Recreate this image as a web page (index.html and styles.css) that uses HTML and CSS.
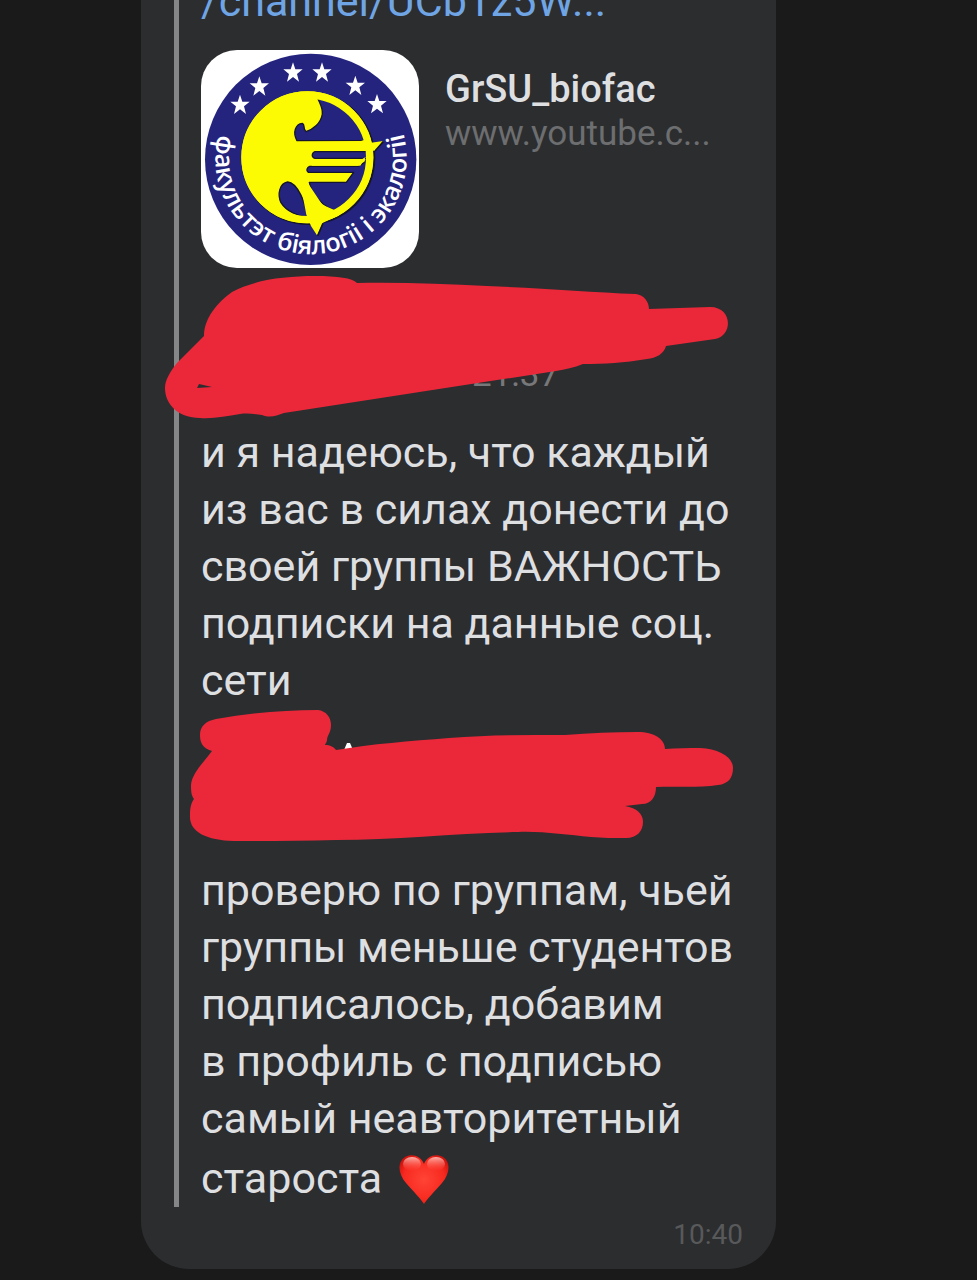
FILE: index.html
```html
<!DOCTYPE html>
<html lang="ru">
<head>
  <meta charset="UTF-8">
  <meta name="viewport" content="width=device-width, initial-scale=1">
  <title>Chat</title>
  <link rel="stylesheet" href="styles.css">
</head>
<body>

<main class="chat">
  <article class="bubble">
    <div class="forwarded">

      <a class="link" href="#">/channel/UCb1z5W...</a>

      <div class="preview">
        <svg class="preview-logo" viewBox="30 30 654 654" aria-hidden="true">
          <defs>
            <path id="star" d="M0-31 7-10H29L12 4 18 27 0 13-18 27-12 4-29-10H-7Z"/>
            <path id="ring" d="M82 284A287 287 0 1 0 638 284"/>
          </defs>
          <circle cx="359" cy="358" r="317" fill="#24247f"/>
          <g fill="#fff">
            <use href="#star" x="147" y="195"/>
            <use href="#star" x="205" y="140"/>
            <use href="#star" x="306" y="98"/>
            <use href="#star" x="393" y="98"/>
            <use href="#star" x="493" y="138"/>
            <use href="#star" x="558" y="193"/>
          </g>
          <!-- yellow disc with its shadow -->
          <circle cx="353" cy="355" r="200" fill="#15152e"/>
          <circle cx="349" cy="352" r="198" fill="#fdfb04"/>
          <!-- cutouts -->
          <g fill="#24247f" stroke="#15152e" stroke-width="4" stroke-linejoin="round">
            <path d="M380 174C450 190 508 238 522 302H318C304 276 314 252 334 250C344 254 334 266 345 275C366 268 390 250 394 222C396 204 386 190 380 174Z"/>
            <path d="M372 335H528V355H372C361 352 361 340 372 335Z"/>
            <path d="M356 379H502L522 366L528 352C530 430 492 480 432 512C398 500 362 466 355 427H466L488 397H352C344 392 348 382 356 379Z"/>
            <path d="M290 426C266 430 258 462 270 488C286 514 320 528 350 532C344 490 320 428 290 426Z"/>
          </g>
          <circle cx="349" cy="352" r="187" fill="none" stroke="#fdfb04" stroke-width="22"/>
          <path d="M510 303 528 297 540 308 577 303 552 332H320V306Z" fill="#fdfb04"/>
          <path d="M372 357H514L525 350 508 377H362Z" fill="#fdfb04"/>
          <path d="M346 524 360 558 378 586 396 548 440 528 470 500 430 510 394 494 350 428 330 440Z" fill="#fdfb04"/>
          <path d="M396 550 380 588M552 333 577 305" stroke="#15152e" stroke-width="5"/>
          <text class="logo-text"><textPath href="#ring">факультэт біялогіі і экалогіі</textPath></text>
        </svg>
        <div class="preview-info">
          <div class="preview-title">GrSU_biofac</div>
          <div class="preview-site">www.youtube.c...</div>
        </div>
      </div>

      <div class="sender">
        <time class="sender-time">21:37</time>
        <svg class="marker" viewBox="165 268 570 156" aria-hidden="true">
          <path fill="#ea2839" d="M204 336C204 318 218 302 232 292C254 280 284 276 315 276C338 276 352 278 357 283C400 282 444 284 487 286C540 288 590 292 636 294C644 295 649 302 649 309L710 307C733 307 733 336 715 339L666 346C664 354 656 358 647 359C624 363 604 364 583 364C574 368 565 369 556 371L426 391L284 413C276 416 270 418 262 415C256 414 248 413 240 414C226 416 214 419 200 418C178 418 165 404 165 388C165 380 170 372 177 363Z"/>
          <path fill="#2c2d2f" d="M197 388 199 384 212 387Z"/>
        </svg>
      </div>

      <p class="message">и я надеюсь, что каждый из вас в силах донести до своей группы ВАЖНОСТЬ подписки на данные соц. сети</p>

      <div class="sender sender-short">
        <svg class="marker" viewBox="165 709 570 156" aria-hidden="true">
          <path fill="#fff" d="M344 750 347 743H350L353 750Z"/>
          <path fill="#ea2839" d="M212 751C202 748 200 742 200 735C200 726 206 721 216 719C250 713 284 710 318 710C326 711 331 717 331 725C331 733 327 735 327 740C327 742 325 744 325 745C330 745 334 747 336 750C372 744 410 741 449 738C488 735 526 735 565 735C590 733 614 732 638 732C654 732 665 739 665 749C677 748 688 748 700 748C719 749 733 757 733 768C733 778 728 784 718 785C698 788 676 786 656 787C656 797 651 804 642 804L625 806C637 808 643 814 643 822C643 831 637 838 626 838C614 838 602 838 591 837C567 835 542 831 518 832C458 833 396 840 336 840C302 841 268 841 234 841C206 840 189 832 190 815C190 808 191 803 194 799C191 795 191 790 191 785C192 773 204 762 212 751Z"/>
        </svg>
      </div>

      <p class="message">проверю по группам, чьей группы меньше студентов подписалось, добавим в&nbsp;профиль с подписью самый неавторитетный староста
        <svg class="heart" viewBox="0 0 50 50" role="img" aria-label="❤️">
          <defs>
            <radialGradient id="heartFill" cx="50%" cy="50%" r="60%">
              <stop offset="0" stop-color="#ff4436"/>
              <stop offset="0.7" stop-color="#f8291f"/>
              <stop offset="1" stop-color="#c9120d"/>
            </radialGradient>
            <linearGradient id="heartShine" x1="0" y1="0" x2="0" y2="1">
              <stop offset="0" stop-color="#ffc4bd" stop-opacity="0.9"/>
              <stop offset="1" stop-color="#ff5a4c" stop-opacity="0"/>
            </linearGradient>
          </defs>
          <path fill="url(#heartFill)" d="M25 49C22 44 14 36 7 28C-1 19-2 7 6 2C13-2 22 1 25 9C28 1 37-2 44 2C52 7 51 19 43 28C36 36 28 44 25 49Z"/>
          <ellipse cx="13" cy="9" rx="9" ry="7" fill="url(#heartShine)"/>
          <ellipse cx="37" cy="9" rx="9" ry="7" fill="url(#heartShine)"/>
        </svg>
      </p>
    </div>
    <time class="sent-time">10:40</time>
  </article>
</main>

</body>
</html>
```
FILE: styles.css
```css
* {
  box-sizing: border-box;
}
body {
  margin: 0;
  background-color: #1a1a1a;
  font-family: Roboto, "Noto Sans", sans-serif;
  color: #dedfe1;
}
/* newest message stays at the bottom, older content runs off the top */
.chat {
  display: flex;
  flex-direction: column;
  justify-content: flex-end;
  height: 100vh;
  padding: 0 24px 11px 141px;
  overflow: hidden;
}
.bubble {
  flex-shrink: 0;
  width: 100%;
  max-width: 635px;
  padding: 48px 33px 18px;
  background-color: #2c2d2f;
  border-radius: 48px;
}
.forwarded {
  padding-left: 22px;
  border-left: 5px solid #858688;
}
.link {
  display: block;
  color: #70a5e5;
  font-size: 43px;
  line-height: 57px;
  text-decoration: none;
}
.preview {
  display: flex;
  gap: 26px;
  margin-top: 20px;
}
.preview-logo {
  width: 218px;
  height: 218px;
  background-color: #fff;
  border-radius: 36px;
}
.logo-text {
  font-family: "Open Sans", sans-serif;
  font-size: 76px;
  font-weight: 600;
  fill: #fff;
}
.preview-info {
  padding-top: 16px;
}
.preview-title {
  font-size: 38px;
  font-weight: 500;
  line-height: 47px;
}
.preview-site {
  color: #6d6e70;
  font-size: 35px;
  line-height: 42px;
}
.sender {
  position: relative;
  height: 156px;
  padding: 86px 0 0 271px;
}
.sender-short {
  height: 153px;
}
.sender-time {
  color: #77787a;
  font-size: 35px;
  line-height: 42px;
}
/* marker strokes drawn over the sender's name */
.marker {
  position: absolute;
  top: 0;
  left: -36px;
  width: 570px;
  height: 156px;
}
.message {
  margin: 0;
  font-size: 43px;
  line-height: 57px;
}
.heart {
  width: 50px;
  height: 50px;
  margin-top: 8px;
  margin-left: 6px;
  vertical-align: -12px;
}
.sent-time {
  display: block;
  margin-top: 11px;
  color: #58595b;
  font-size: 28px;
  line-height: 33px;
  text-align: right;
}
```
